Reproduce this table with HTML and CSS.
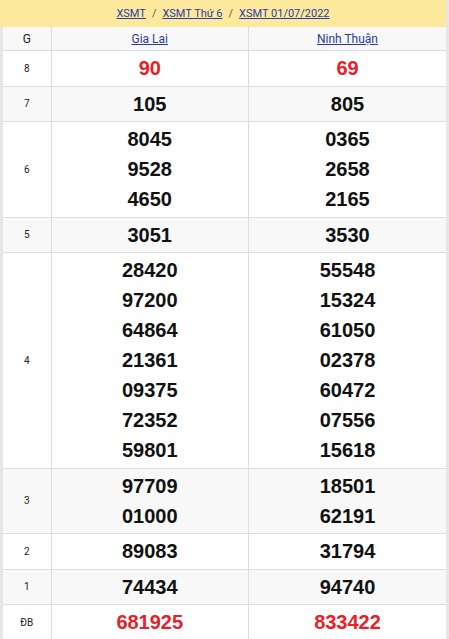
FILE: index.html
```html
<!DOCTYPE html>
<html>
<head>
<meta charset="utf-8">
<link rel="stylesheet" href="styles.css">
</head>
<body>
<div class="wrap">
  <div class="crumb">
    <a href="#">XSMT</a><span class="sep">/</span><a href="#">XSMT Thứ 6</a><span class="sep">/</span><a href="#">XSMT 01/07/2022</a>
  </div>
  <table class="kq">
    <colgroup><col class="c-g"><col class="c-p"><col class="c-p"></colgroup>
    <tr class="alt head"><td class="lbl g">G</td><td class="prov"><a href="#">Gia Lai</a></td><td class="prov"><a href="#">Ninh Thuận</a></td></tr>
    <tr><td class="lbl">8</td><td class="num red">90</td><td class="num red">69</td></tr>
    <tr class="alt"><td class="lbl">7</td><td class="num">105</td><td class="num">805</td></tr>
    <tr><td class="lbl">6</td><td class="num"><div>8045</div><div>9528</div><div>4650</div></td><td class="num"><div>0365</div><div>2658</div><div>2165</div></td></tr>
    <tr class="alt"><td class="lbl">5</td><td class="num">3051</td><td class="num">3530</td></tr>
    <tr><td class="lbl">4</td><td class="num"><div>28420</div><div>97200</div><div>64864</div><div>21361</div><div>09375</div><div>72352</div><div>59801</div></td><td class="num"><div>55548</div><div>15324</div><div>61050</div><div>02378</div><div>60472</div><div>07556</div><div>15618</div></td></tr>
    <tr class="alt"><td class="lbl">3</td><td class="num"><div>97709</div><div>01000</div></td><td class="num"><div>18501</div><div>62191</div></td></tr>
    <tr><td class="lbl">2</td><td class="num">89083</td><td class="num">31794</td></tr>
    <tr class="alt"><td class="lbl">1</td><td class="num">74434</td><td class="num">94740</td></tr>
    <tr><td class="lbl">ĐB</td><td class="num red">681925</td><td class="num red">833422</td></tr>
  </table>
</div>
</body>
</html>
```
FILE: styles.css
```css
html, body {
  margin: 0;
  padding: 0;
  background: #e6e6e6;
  font-family: Roboto, "Liberation Sans", Arial, sans-serif;
}
.wrap {
  margin: 0 3px 0 0;
}
.crumb {
  background: #fde99b;
  height: 27px;
  display: flex;
  justify-content: center;
  align-items: center;
  font-size: 11px;
  color: #333;
}
.crumb a {
  color: #2b3aa8;
  text-decoration: underline;
}
.sep {
  margin: 0 6px;
  color: #555;
}
.kq {
  border-collapse: collapse;
  table-layout: fixed;
  width: calc(100% - 3px);
  margin-left: 3px;
  background: #fff;
}
.c-g { width: 48px; }
.kq td {
  border: 1px solid #dcdcdc;
  text-align: center;
  vertical-align: middle;
  padding: 0;
}
.kq tr:first-child td { border-top: none; }
.kq td:first-child { border-left: none; }
.kq td:last-child { border-right: none; }
.alt td { background: #f8f8f8; }
.head td { height: 23px; }
.lbl {
  font-size: 10px;
  color: #222;
}
.lbl.g { font-size: 12px; }
.prov { font-size: 12px; }
.prov a { color: #2b3aa8; }
.num {
  font-family: "Liberation Sans", Arial, sans-serif;
  font-weight: bold;
  font-size: 20px;
  line-height: 30px;
  padding: 2px 0 2.5px !important;
  color: #111;
}
.num.red { color: #e8202a; }
```
